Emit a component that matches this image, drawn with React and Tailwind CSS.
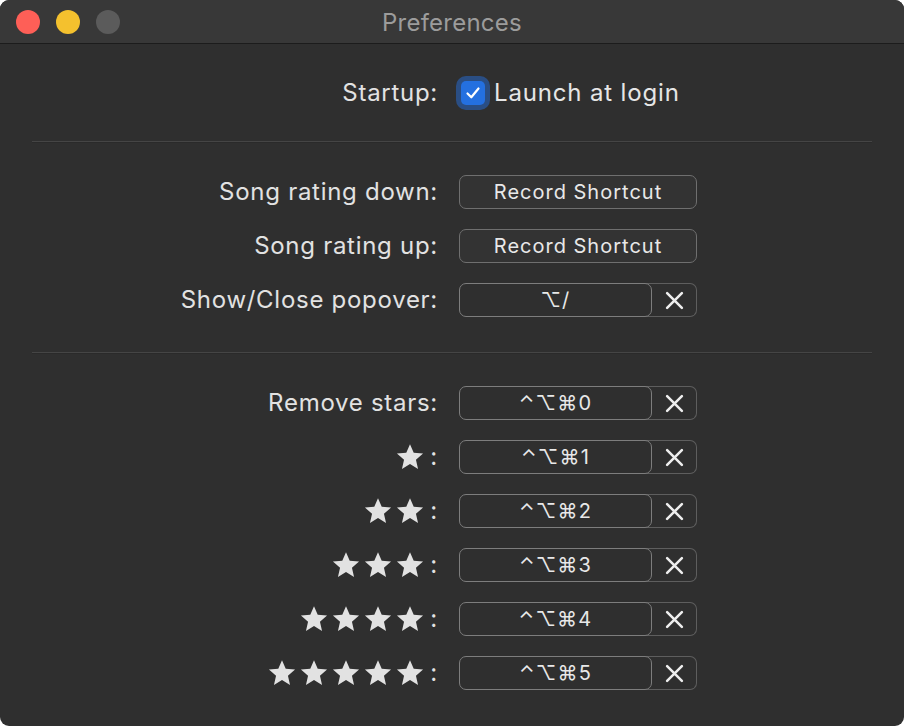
import React from "react";

const font = { fontFamily: "Inter, 'DejaVu Sans', sans-serif" };

const Star = () => (
  <svg width="28" height="28" viewBox="0 0 24 24" className="shrink-0">
    <path
      d="M12 1l3.2 7.4 8 .7-6.1 5.3 1.8 7.9L12 18.1l-6.9 4.2 1.8-7.9L.8 9.1l8-.7z"
      fill="#e2e2e2"
    />
  </svg>
);

const Stars = ({ n }) => (
  <span className="flex items-center gap-[4px]">
    {Array.from({ length: n }).map((_, i) => (
      <Star key={i} />
    ))}
    <span className="ml-[2px]">:</span>
  </span>
);

const RecordButton = () => (
  <button className="h-[34px] w-[238px] rounded-[7px] border border-[#6f6f6f] bg-[#333333] text-[20px] tracking-[0.05em] text-[#e8e8e8]">
    Record Shortcut
  </button>
);

const ShortcutField = ({ keys }) => (
  <div className="flex h-[34px] w-[238px]">
    <div className="relative z-10 flex h-[34px] w-[193px] items-center justify-center rounded-[7px] border border-[#7d7d7d] bg-[#2f2f2f] text-[20px] tracking-[0.06em] text-[#e8e8e8]">
      {keys}
    </div>
    <div className="-ml-[8px] flex h-[34px] flex-1 items-center justify-center rounded-r-[7px] border-y border-r border-[#5e5e5e] pl-[8px]">
      <svg width="19" height="19" viewBox="0 0 18 18">
        <path d="M2 2L16 16M16 2L2 16" stroke="#eeeeee" strokeWidth="2.4" strokeLinecap="round" />
      </svg>
    </div>
  </div>
);

const Row = ({ label, children }) => (
  <div className="flex h-[34px] items-center">
    <div className="flex w-[406px] justify-end text-[24px] tracking-[0.03em] text-[#e2e2e2]">{label}</div>
    <div className="ml-[21px]">{children}</div>
  </div>
);

const Divider = () => <div className="h-[2px] border-t border-[#454545] bg-[#2a2a2a]" />;

export default function App() {
  const starRows = [1, 2, 3, 4, 5];
  return (
    <div className="bg-white" style={font}>
      <div className="h-[726px] w-[904px] overflow-hidden rounded-[9px] bg-[#2f2f2f]">
        <div className="relative flex h-[44px] items-center justify-center border-b border-[#1c1c1c] bg-[#383838]">
          <div className="absolute left-[16px] top-[10px] flex gap-[16px]">
            <span className="h-[24px] w-[24px] rounded-full bg-[#fe5f57]" />
            <span className="h-[24px] w-[24px] rounded-full bg-[#f4c12e]" />
            <span className="h-[24px] w-[24px] rounded-full bg-[#5b5b5b]" />
          </div>
          <span className="pt-[2px] text-[24px] tracking-[0.01em] text-[#9c9c9c]">Preferences</span>
        </div>

        <div className="px-[32px] pt-[32px]">
          <div className="flex h-[34px] items-center">
            <div className="w-[406px] text-right text-[24px] tracking-[0.03em] text-[#e2e2e2]">Startup:</div>
            <div className="ml-[23px] flex h-[24px] w-[24px] items-center justify-center rounded-[5px] bg-[#2470e0] shadow-[0_0_0_5px_rgba(40,100,190,0.6)]">
              <svg width="16" height="16" viewBox="0 0 16 16">
                <path d="M2.5 8.5L6.3 12.3L13.5 3.5" fill="none" stroke="#ffffff" strokeWidth="2.2" strokeLinecap="round" strokeLinejoin="round" />
              </svg>
            </div>
            <span className="ml-[9px] text-[24px] tracking-[0.035em] text-[#e6e6e6]">Launch at login</span>
          </div>

          <div className="mt-[31px]">
            <Divider />
          </div>

          <div className="mt-[32px] flex flex-col gap-[20px]">
            <Row label="Song rating down:">
              <RecordButton />
            </Row>
            <Row label="Song rating up:">
              <RecordButton />
            </Row>
            <Row label="Show/Close popover:">
              <ShortcutField keys="⌥/" />
            </Row>
          </div>

          <div className="mt-[35px]">
            <Divider />
          </div>

          <div className="mt-[32px] flex flex-col gap-[20px]">
            <Row label="Remove stars:">
              <ShortcutField keys="⌃⌥⌘0" />
            </Row>
            {starRows.map((n) => (
              <Row key={n} label={<Stars n={n} />}>
                <ShortcutField keys={`⌃⌥⌘${n}`} />
              </Row>
            ))}
          </div>
        </div>
      </div>
    </div>
  );
}
